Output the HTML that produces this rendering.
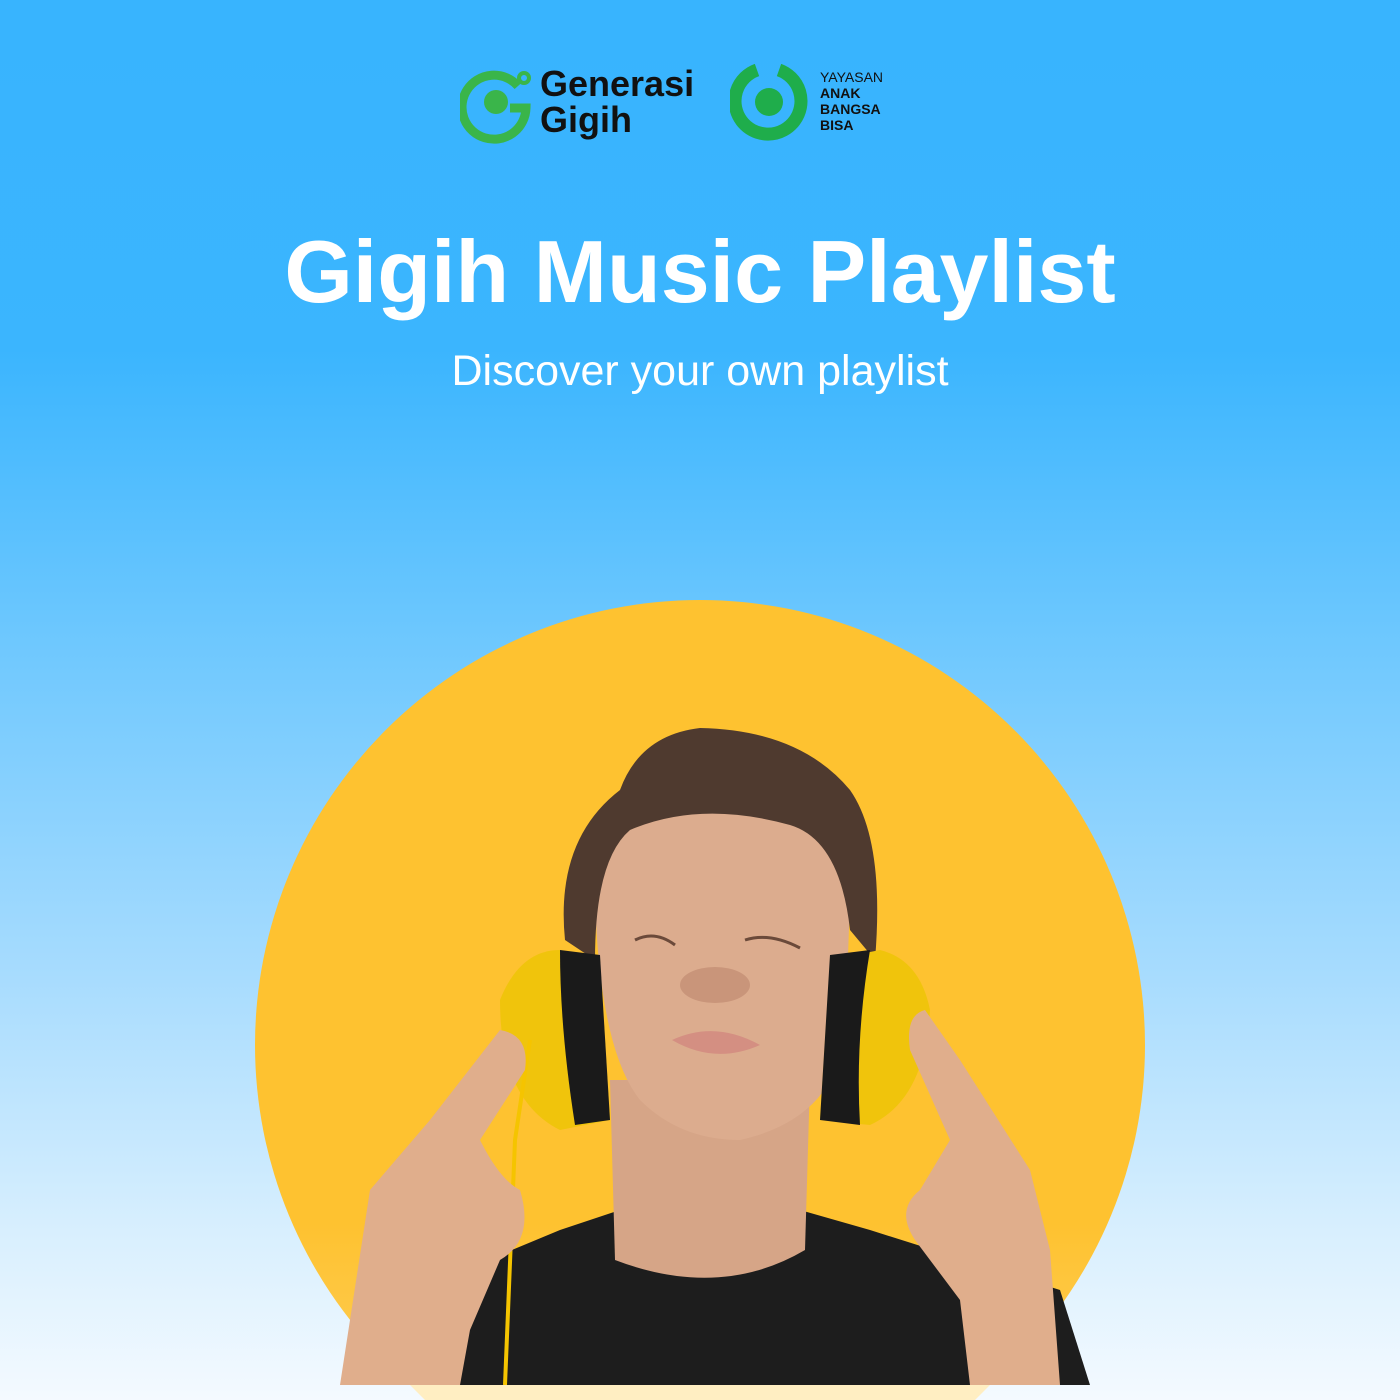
<!DOCTYPE html>
<html><head><meta charset="utf-8"><style>
html,body{margin:0;padding:0;width:1400px;height:1400px;overflow:hidden}
body{position:relative;background:linear-gradient(180deg,#38b4fe 0%,#3bb5fe 25%,#6cc7fe 45%,#a8dcfe 70%,#d8effe 88%,#f4faff 100%);font-family:"Liberation Sans",sans-serif}
.t{position:absolute;left:0;width:1400px;text-align:center;color:#fff;white-space:nowrap}
svg{display:block}
</style></head><body>
<svg style="position:absolute;left:460px;top:64px" width="250" height="80" viewBox="0 0 250 80">
<path d="M58 22 A32 32 0 1 0 66 44 L50 44" fill="none" stroke="#3ab54a" stroke-width="9"/>
<circle cx="36" cy="38" r="12" fill="#3ab54a"/>
<circle cx="64" cy="14" r="5" fill="none" stroke="#3ab54a" stroke-width="4"/>
<text x="80" y="32" font-family="Liberation Sans" font-weight="bold" font-size="36" fill="#111">Generasi</text>
<text x="80" y="68" font-family="Liberation Sans" font-weight="bold" font-size="36" fill="#111">Gigih</text>
</svg>
<svg style="position:absolute;left:730px;top:64px" width="170" height="80" viewBox="0 0 170 80">
<path d="M27 6 A33 33 0 1 0 49 6" fill="none" stroke="#1fad4b" stroke-width="13"/>
<circle cx="39" cy="38" r="14" fill="#1fad4b"/>
<text x="90" y="18" font-size="14" fill="#111" font-family="Liberation Sans">YAYASAN</text>
<text x="90" y="34" font-size="14" font-weight="bold" fill="#111" font-family="Liberation Sans">ANAK</text>
<text x="90" y="50" font-size="14" font-weight="bold" fill="#111" font-family="Liberation Sans">BANGSA</text>
<text x="90" y="66" font-size="14" font-weight="bold" fill="#111" font-family="Liberation Sans">BISA</text>
</svg>
<div class="t" style="top:222px;font-size:88px;line-height:100px;font-weight:bold;letter-spacing:0px">Gigih Music Playlist</div>
<div class="t" style="top:346px;font-size:43px;line-height:50px">Discover your own playlist</div>
<svg style="position:absolute;left:0;top:0" width="1400" height="1400" viewBox="0 0 1400 1400">
<defs><clipPath id="c"><rect x="0" y="0" width="1400" height="1385"/></clipPath>
<linearGradient id="y" x1="0" y1="0" x2="0" y2="1"><stop offset="0.7" stop-color="#fec230"/><stop offset="1" stop-color="#fed36a"/></linearGradient></defs>
<path d="M410 1385 L990 1385 L975 1400 L425 1400Z" fill="#ffeec2"/>
<g clip-path="url(#c)">
<circle cx="700" cy="1045" r="445" fill="url(#y)"/>
<path d="M420 1385 L440 1280 L560 1230 L620 1210 L800 1210 L870 1230 L1060 1290 L1090 1385Z" fill="#1d1d1d"/>
<path d="M610 1080 L810 1080 L805 1250 Q720 1300 615 1260Z" fill="#d6a587"/>
<path d="M595 900 Q590 800 720 795 Q850 800 850 900 L845 1040 Q830 1120 740 1140 Q680 1140 640 1100 Q600 1050 595 900Z" fill="#dcac8e"/>
<path d="M565 940 Q555 840 620 790 Q640 735 700 728 Q800 730 850 790 Q885 840 875 960 L850 930 Q840 840 790 825 Q700 800 630 830 Q595 860 595 960Z" fill="#4f3a2f"/>
<path d="M635 940 Q655 930 675 945 M745 940 Q770 932 800 948" stroke="#6b4a3a" stroke-width="3" fill="none"/>
<path d="M672 1040 Q715 1020 760 1045 Q715 1065 672 1040Z" fill="#d48f82"/>
<ellipse cx="715" cy="985" rx="35" ry="18" fill="#c9957a"/>
<path d="M500 1000 Q520 950 560 950 L600 960 L610 1120 L560 1130 Q500 1100 500 1000Z" fill="#f0c40c"/>
<path d="M560 950 L600 955 L610 1120 L575 1125 Q560 1030 560 950Z" fill="#1a1a1a"/>
<path d="M880 950 Q920 960 930 1010 Q925 1100 870 1125 L820 1120 L830 960Z" fill="#f0c40c"/>
<path d="M830 955 L870 950 Q855 1040 860 1125 L820 1120Z" fill="#1a1a1a"/>
<path d="M530 1040 L515 1140 L505 1385" stroke="#f5c400" stroke-width="4" fill="none"/>
<path d="M340 1385 L370 1190 L430 1120 L500 1030 Q530 1035 525 1070 L480 1140 Q500 1180 520 1190 Q535 1240 500 1260 L470 1330 L460 1385Z" fill="#e0ae8c"/>
<path d="M1060 1385 L1050 1250 L1030 1170 L960 1060 L925 1010 Q905 1015 910 1050 L950 1140 L920 1190 Q895 1210 915 1240 L960 1300 L970 1385Z" fill="#e0ae8c"/>
</g>
</svg>
</body></html>
